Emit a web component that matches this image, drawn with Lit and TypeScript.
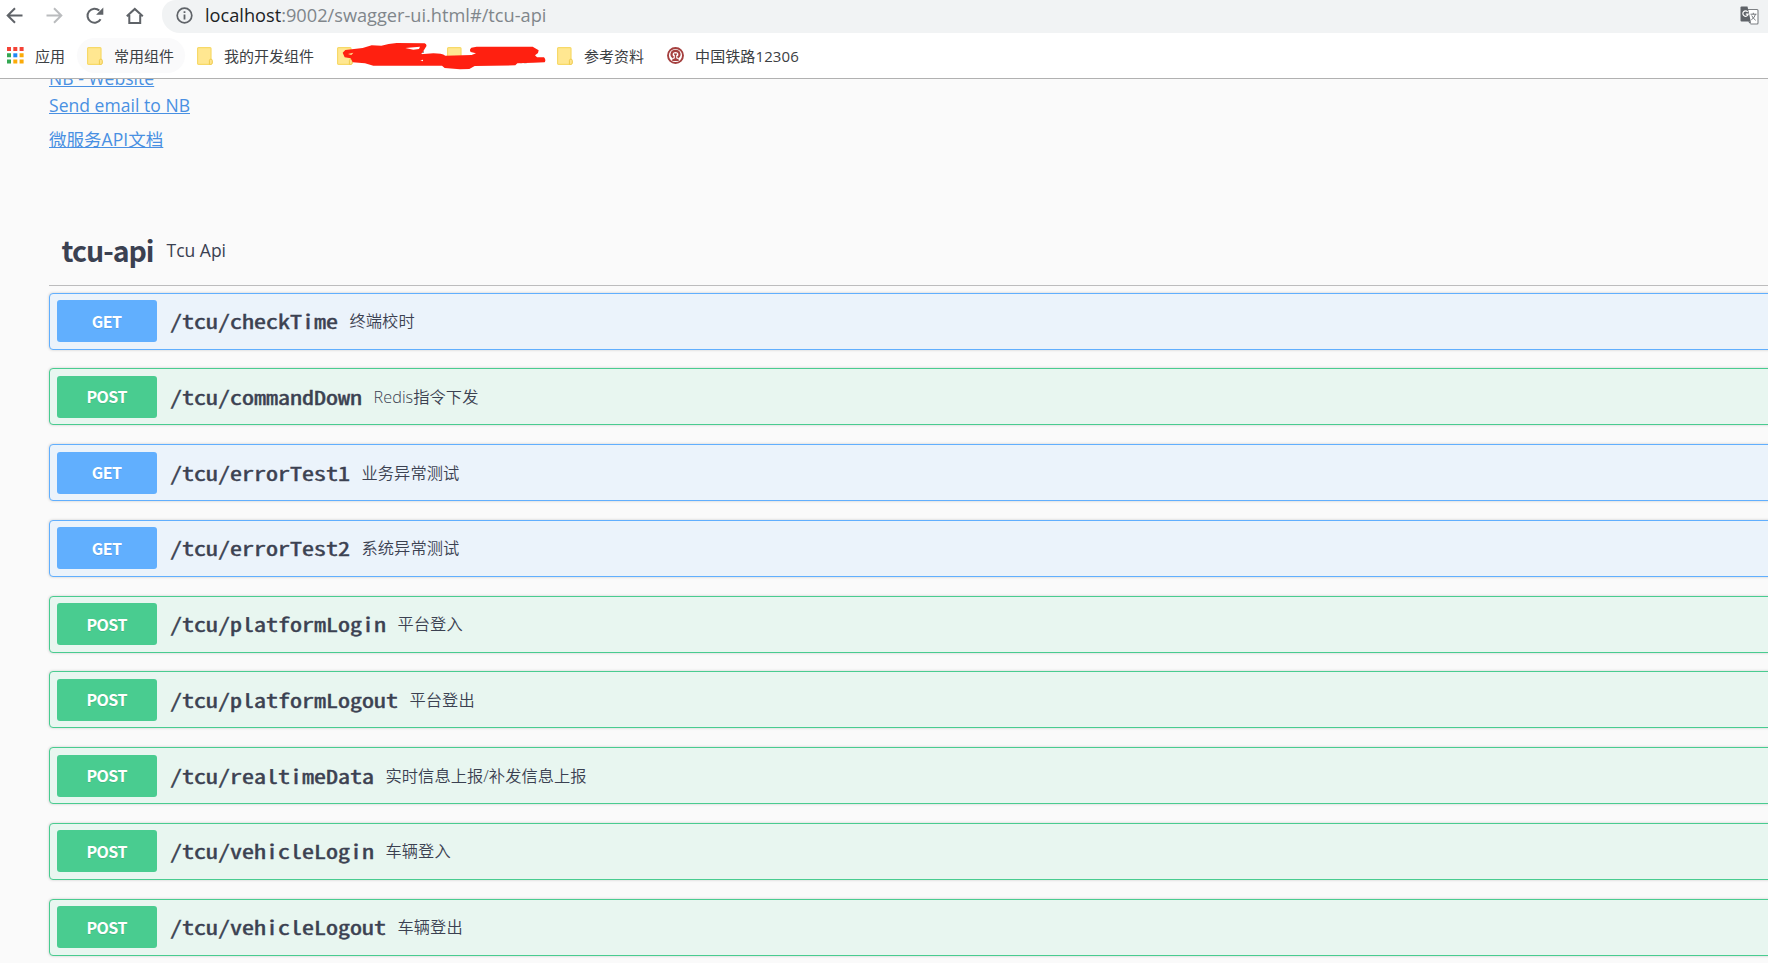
import { LitElement, html, css, svg } from "lit";
import { customElement, property } from "lit/decorators.js";

const folderIcon = svg`<svg class="icon" width="16" height="18" viewBox="0 0 16 18">
  <rect x="0.6" y="0.6" width="13.4" height="16.8" rx="1" fill="#ffe791" stroke="#f7d968" stroke-width="1.2"/>
  <path d="M12.4 17.4V13.6a1.4 1.4 0 0 1 2.9 0v2.4q0 1.4-1.5 1.4z" fill="#ffe48a" stroke="#efcb50" stroke-width="1"/></svg>`;

const appsIcon = svg`<svg class="icon" width="17" height="17" viewBox="0 0 17 17">
  <path d="M0 0h4v4H0zM6.3 0h4v4h-4zM12.6 0h4v4h-4z" fill="#f44336"/>
  <path d="M0 6.3h4v4H0zM0 12.6h4v4H0z" fill="#34a853"/>
  <path d="M6.3 6.3h4v4h-4z" fill="#1e88f5"/>
  <path d="M12.6 6.3h4v4h-4zM6.3 12.6h4v4h-4zM12.6 12.6h4v4h-4z" fill="#fbab09"/></svg>`;

const railIcon = svg`<svg class="icon" width="17" height="17" viewBox="0 0 17 17">
  <circle cx="8.5" cy="8.5" r="7.5" fill="#fff" stroke="#a5403f" stroke-width="1.9"/>
  <path d="M6.4 10.6C3 8.400 4.400 3.900 8.500 3.900S14 8.400 10.600 10.600" fill="none" stroke="#a5403f" stroke-width="2.1"/>
  <path d="M7 6.500h3v1l-.8.6v3.100l2.600 1.200v1.600H5.200v-1.600l2.600-1.200V8.100L7 7.500z" fill="#a5403f"/></svg>`;

/* Advance of one character of the endpoint path, in pixels. */
const PATH_ADVANCE = 12;

@customElement("api-operation")
export class ApiOperation extends LitElement {
  @property() method = "GET";
  @property() path = "";
  @property() summary = "";

  static styles = css`
    :host { display: block; }
    .block {
      box-sizing: border-box; height: 57px; display: flex; align-items: center;
      border: 1px solid; border-radius: 4px; padding: 0 0 0.2px 7.2px;
      box-shadow: 0 0 3px rgba(0, 0, 0, 0.19);
    }
    .get { border-color: #61affe; background: #ebf3fb; }
    .post { border-color: #49cc90; background: #e8f6f0; }
    .method {
      width: 100px; height: 42px; box-sizing: border-box; padding: 0 1px 1px 0; display: flex; align-items: center; justify-content: center;
      border-radius: 3px; color: #fff; font: 700 16px/1 "Noto Sans CJK SC", sans-serif; letter-spacing: -0.5px;
      text-shadow: 0 1px 0 rgba(0, 0, 0, 0.1);
    }
    .get .method { background: #61affe; }
    .post .method { background: #49cc90; }
    .path { margin: 0 11.5px 0 12.8px; white-space: pre; color: #3b4151; }
    .glyphs {
      display: inline-block; transform: scaleX(1.2632); transform-origin: 0 50%;
      font: 400 19px/28px "Noto Sans Mono CJK SC", "Liberation Mono", monospace;
      -webkit-text-stroke: 0.45px #3b4151;
    }
    .summary { color: #3b4151; font: 350 16.25px/28px "Open Sans", "Noto Sans CJK SC", sans-serif; letter-spacing: 0.05px; white-space: nowrap; }
  `;

  render() {
    return html`<div class="block ${this.method.toLowerCase()}">
      <span class="method">${this.method}</span>
      <span class="path" style="width:${this.path.length * PATH_ADVANCE}px"><span class="glyphs">${this.path}</span></span>
      <span class="summary">${this.summary}</span>
    </div>`;
  }
}

const operations = [
  ["GET", "/tcu/checkTime", "终端校时"],
  ["POST", "/tcu/commandDown", "Redis指令下发"],
  ["GET", "/tcu/errorTest1", "业务异常测试"],
  ["GET", "/tcu/errorTest2", "系统异常测试"],
  ["POST", "/tcu/platformLogin", "平台登入"],
  ["POST", "/tcu/platformLogout", "平台登出"],
  ["POST", "/tcu/realtimeData", "实时信息上报/补发信息上报"],
  ["POST", "/tcu/vehicleLogin", "车辆登入"],
  ["POST", "/tcu/vehicleLogout", "车辆登出"],
];

@customElement("app-root")
export class AppRoot extends LitElement {
  static styles = css`
    :host { display: flex; flex-direction: column; width: 100%; height: 963px; overflow: hidden; background: #fafafa; color: #3b4151; }
    svg { display: block; flex: none; }
    .toolbar { height: 33px; flex: none; display: flex; background: #fff; }
    .nav { width: 162px; box-sizing: border-box; padding: 6px 0 0 5px; display: flex; gap: 20px; }
    .omnibox {
      flex: 1; height: 33px; box-sizing: border-box; padding: 0 9px 2px 14px; display: flex; align-items: center;
      background: #f1f3f4; border-radius: 14px 0 0 18px;
    }
    .url { margin-left: 12px; padding-bottom: 1px; flex: 1; font: 400 18.2px/24px "Open Sans", sans-serif; color: #80868b; white-space: nowrap; }
    .host { color: #202124; }
    .bookmarks { height: 46px; flex: none; position: relative; display: flex; gap: 2px; padding: 5px 0 0; box-sizing: border-box; background: #fff; border-bottom: 1px solid #b1b1b1; }
    .bookmark { height: 35px; box-sizing: border-box; padding: 0 10px; display: flex; align-items: center; border-radius: 18px; }
    .bookmark.apps { padding-left: 7px; }
    .bookmark.hover { background: #fafafb; }
    .icon { margin-right: 11px; }
    .label { min-width: 60px; padding-right: 1px; font: 400 15px/20px "Open Sans", "Noto Sans CJK SC", sans-serif; color: #3c4043; white-space: nowrap; }
    .apps .label { min-width: 0; padding-right: 0; }
    .rail .label { letter-spacing: 0.1px; }
    .scribble { position: absolute; left: 340px; top: 7px; }
    .page { flex: 1; overflow: hidden; padding-left: 49px; }
    .link { display: table; font: 400 17.5px/24px "Open Sans", "Noto Sans CJK SC", sans-serif; color: #4990e2; text-decoration: underline; letter-spacing: 0.04px; white-space: nowrap; }
    .website { margin-top: -13px; }
    .email { margin-top: 3px; }
    .docs { margin-top: 10px; }
    .tag { height: 67.6px; margin-top: 67px; box-sizing: border-box; display: flex; align-items: center; padding: 0 0 3px 12.5px; border-bottom: 1px solid #bcbcbd; }
    .name { font: 700 28.5px/40px "Noto Sans CJK SC", sans-serif; letter-spacing: -1px; }
    .about { margin-left: 13px; font: 400 17.5px/24px "Open Sans", sans-serif; }
    .operations { display: flex; flex-direction: column; gap: 18.75px; padding-top: 7px; margin-right: -12px; }
  `;

  render() {
    return html`
      <div class="toolbar">
        <div class="nav">
          <svg width="20" height="20" viewBox="0 0 20 20" fill="none" stroke="#5f6368" stroke-width="2"><path d="M17.500 9.500H3M10 2.300L2.700 9.500l7.300 7.200"/></svg>
          <svg width="20" height="20" viewBox="0 0 20 20" fill="none" stroke="#babcbe" stroke-width="2"><path d="M1.500 9.500H16M9 2.300l7.300 7.200L9 16.700"/></svg>
          <svg width="20" height="20" viewBox="0 0 20 20"><path d="M15.600 13.200A7 7 0 1 1 14.300 4.600" fill="none" stroke="#5f6368" stroke-width="2"/><path d="M18.300 1.500v7.200h-7.200z" fill="#5f6368"/></svg>
          <svg width="20" height="20" viewBox="0 0 20 20" fill="none" stroke="#5f6368" stroke-width="2"><path d="M4.300 9v8h10.900V9M1.800 10.300l8-7.400 8 7.400" stroke-linejoin="miter"/></svg>
        </div>
        <div class="omnibox">
          <svg width="17" height="17" viewBox="0 0 17 17"><circle cx="8.500" cy="8.500" r="7.300" fill="none" stroke="#5f6368" stroke-width="1.700"/><path d="M7.600 7.600h1.800v5H7.600zM7.600 4.300h1.800v1.800H7.600z" fill="#5f6368"/></svg>
          <span class="url"><span class="host">localhost</span>:9002/swagger-ui.html#/tcu-api</span>
          <svg width="19" height="19" viewBox="0 0 19 19"><path d="M8 3.500h9a1 1 0 0 1 1 1V17a1 1 0 0 1-1 1h-6.500" fill="#fff" stroke="#7d8084" stroke-width="1.100"/><path d="M1.500.6h6L10.800 15.500H1.500q-1 0-1-1V1.600q0-1 1-1z" fill="#5f6368"/><path d="M8 15.500h3l-.6 2.500z" fill="#5f6368"/><path d="M7.700 6A2.700 2.700 0 1 0 8.200 8.200H5.800" fill="none" stroke="#fff" stroke-width="1.200"/><path d="M10.500 8.200h6M13.300 6.800v1.400M15.500 8.200q-1 4-4.200 5.600M11.700 9.500q1.500 3.200 4 4.800" fill="none" stroke="#74777b" stroke-width="1"/></svg>
        </div>
      </div>
      <div class="bookmarks">
        <div class="bookmark apps">${appsIcon}<span class="label">应用</span></div>
        <div class="bookmark hover">${folderIcon}<span class="label">常用组件</span></div>
        <div class="bookmark">${folderIcon}<span class="label">我的开发组件</span></div>
        <div class="bookmark">${folderIcon}<span class="label"></span></div>
        <div class="bookmark">${folderIcon}<span class="label"></span></div>
        <div class="bookmark">${folderIcon}<span class="label">参考资料</span></div>
        <div class="bookmark rail">${railIcon}<span class="label">中国铁路12306</span></div>
        <svg class="scribble" width="210" height="32" viewBox="60 120 630 96">
          <path d="M306 156h6M302 164h5M601 188h4M612 188h8" stroke="#444" stroke-width="3"/>
          <path d="M76 150L128 144L155 136L184 137L206 132L230 129L314 130Q321 133 319 139L306 160L302 163L340 160Q365 160 376 167L455 165L468 160L452 156Q447 149 454 143L470 140L638 140L656 151L654 159L645 166L651 172L672 172Q679 180 674 187L640 188L592 190L586 196L464 198L448 207L420 208L374 204L366 197L160 197L135 190L98 187L92 175L74 172L68 158Z" fill="#ff2010"/>
          <path d="M256 144L300 140L297 147L280 149Z" fill="#fff"/>
          <path d="M84 162L100 158L94 165Z" fill="#ffe791"/>
          <path d="M301 181l8-2v5z" fill="#fff"/>
        </svg>
      </div>
      <div class="page">
        <a class="link website">NB - Website</a>
        <a class="link email">Send email to NB</a>
        <a class="link docs">微服务API文档</a>
        <div class="tag"><span class="name">tcu-api</span><span class="about">Tcu Api</span></div>
        <div class="operations">
          ${operations.map(([method, path, summary]) => html`<api-operation .method=${method} .path=${path} .summary=${summary}></api-operation>`)}
        </div>
      </div>`;
  }
}
